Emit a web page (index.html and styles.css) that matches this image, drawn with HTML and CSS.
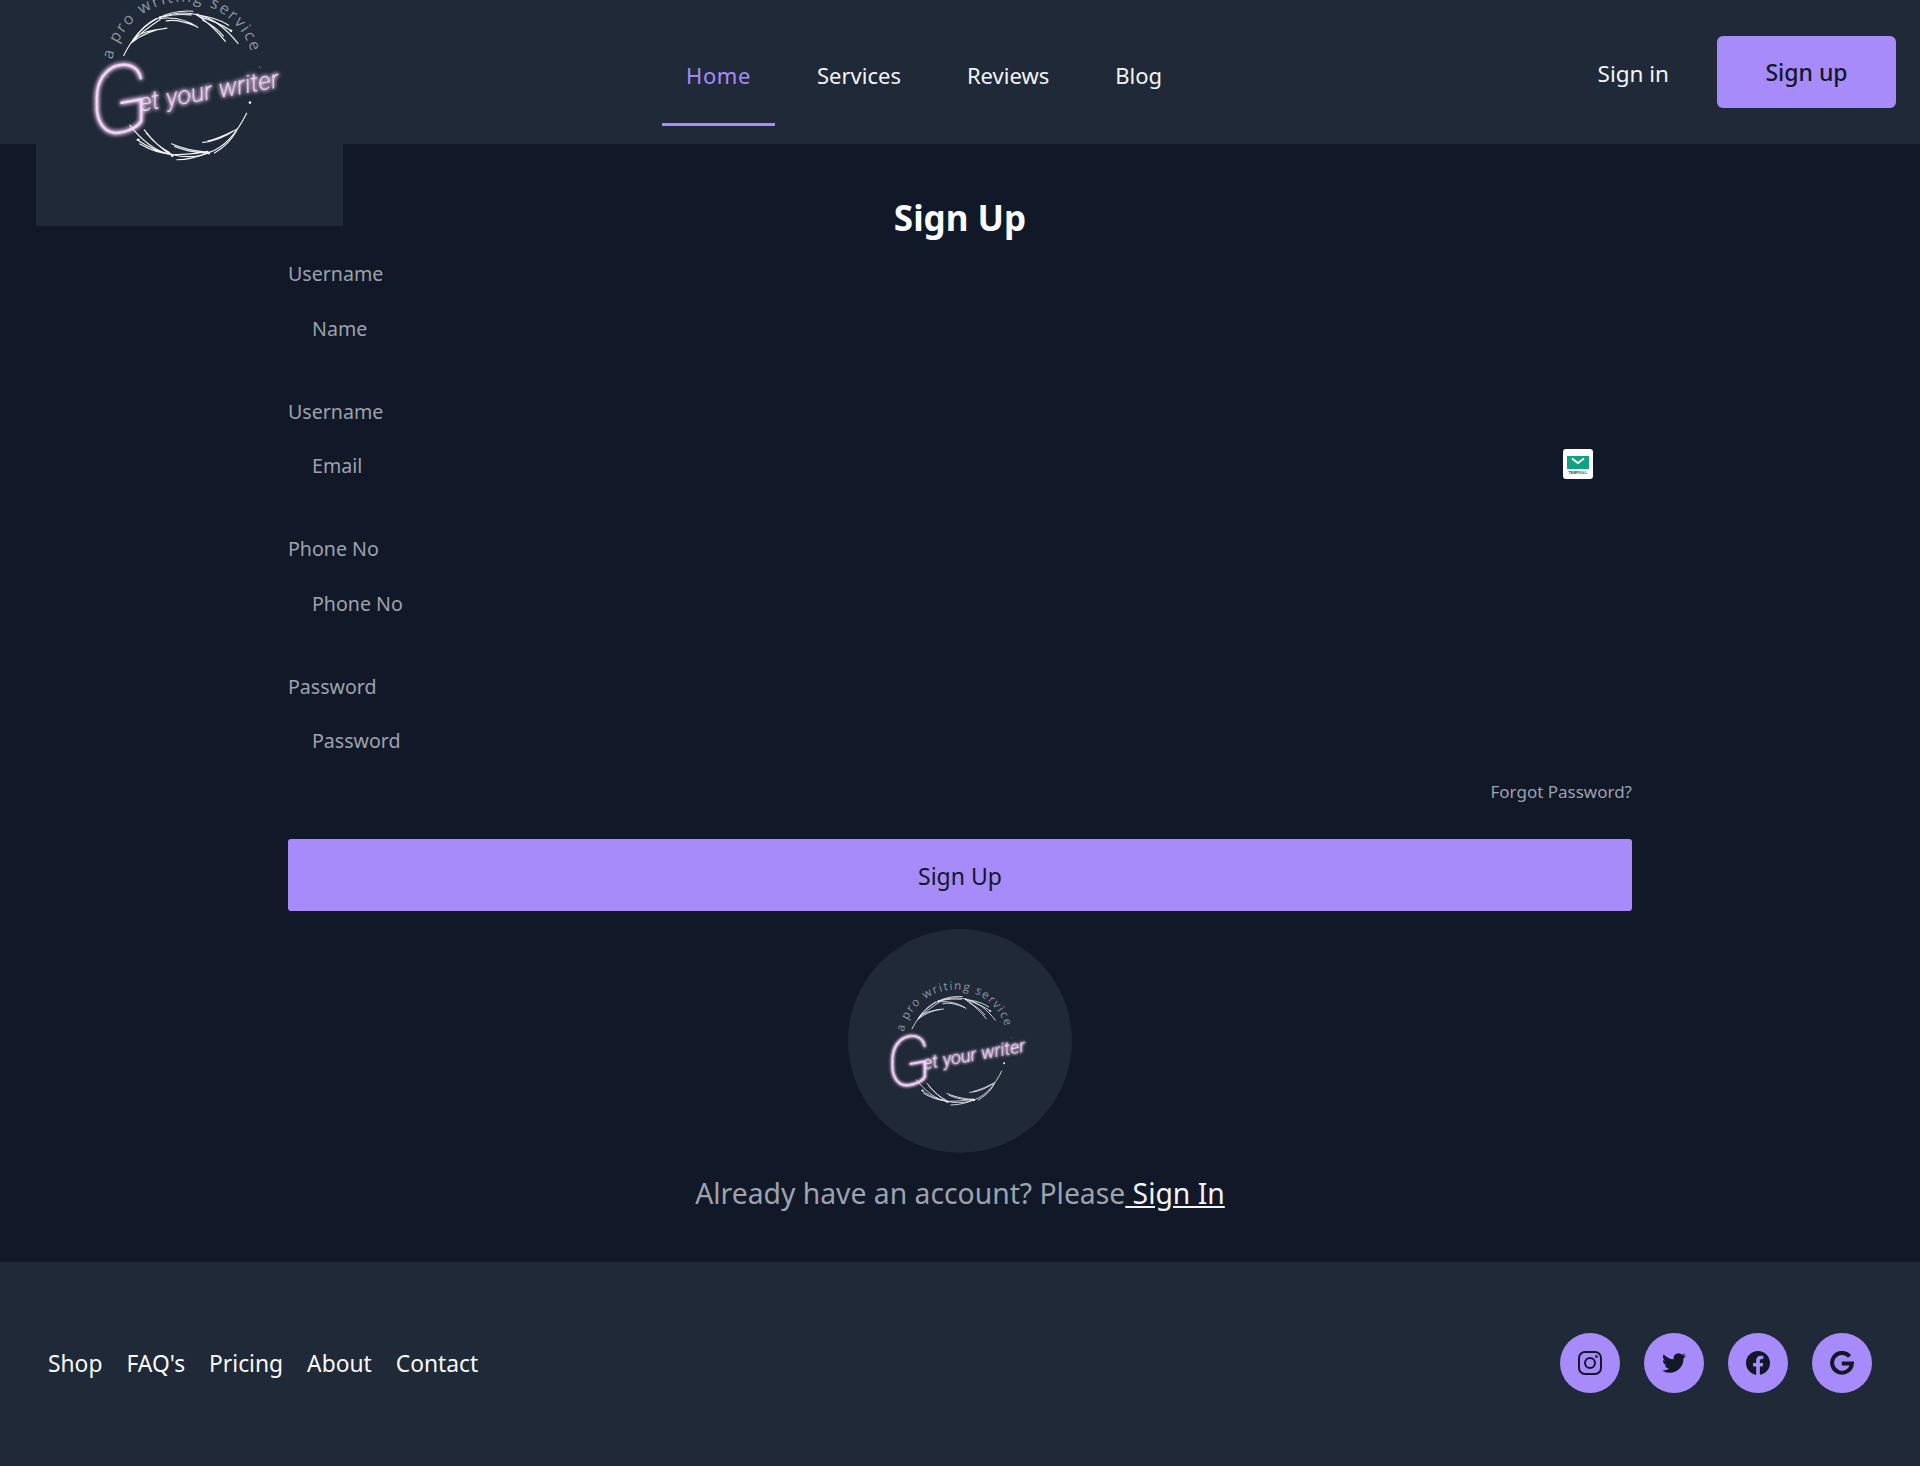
FILE: index.html
```html
<!DOCTYPE html>
<html lang="en">
<head>
  <meta charset="UTF-8">
  <meta name="viewport" content="width=device-width, initial-scale=1.0">
  <title>Sign Up - Get your writer</title>
  <link rel="stylesheet" href="styles.css">
</head>
<body>
  <header class="topbar">
    <a class="logo-box" href="#">
      <svg class="logo-img" viewBox="108 -246 924 924" role="img" aria-label="Get your writer">
        <defs>
          <filter id="neon" x="-20%" y="-40%" width="140%" height="180%">
            <feGaussianBlur stdDeviation="6" result="blur"/>
            <feMerge><feMergeNode in="blur"/><feMergeNode in="blur"/><feMergeNode in="SourceGraphic"/></feMerge>
          </filter>
          <path id="ring" d="M338 179A216 216 0 0 1 760 170"/>
        </defs>
        <g id="logo-art">
          <text class="logo-tag"><textPath href="#ring" textLength="570">a pro writing service</textPath></text>
          <path class="logo-tick" d="M322 235L327 228M780 198L783 205"/>
          <g class="leaf">
            <path d="M372 166C395 120 430 75 480 52C520 38 560 34 595 44C640 52 680 85 716 130"/>
            <path d="M395 128C430 100 460 88 502 84M400 120C420 90 445 68 470 55M405 112C430 95 470 88 490 86M398 124C430 92 460 72 482 58"/>
            <path d="M480 52C510 36 545 31 580 33M480 55C525 50 565 60 595 82M500 62C530 56 560 66 590 78M490 50C520 42 550 42 575 44"/>
            <path d="M595 46C625 48 655 55 688 75M595 46C630 70 655 95 678 124M600 50C640 60 670 75 695 92M610 60C640 75 660 92 672 108"/>
            <path d="M390 376C420 415 470 460 520 465C560 475 600 470 630 458C680 440 715 395 742 340"/>
            <path d="M434 390C460 425 490 450 518 468M412 420C450 445 480 460 520 465M420 432C450 450 485 462 515 462M440 400C465 430 490 448 510 458"/>
            <path d="M516 432C555 450 595 455 630 458M532 480C570 480 600 470 630 458M520 465C555 465 590 462 625 455M525 440C560 455 590 458 620 460"/>
            <path d="M610 428C650 425 680 410 712 388M645 460C670 445 695 425 712 392M625 424C660 415 685 402 705 392"/>
          </g>
          <g class="leaf-dots">
            <circle cx="482" cy="52" r="4"/><circle cx="594" cy="44" r="4"/><circle cx="695" cy="92" r="4"/>
            <circle cx="416" cy="420" r="4"/><circle cx="518" cy="468" r="4"/><circle cx="628" cy="460" r="4"/>
            <circle cx="752" cy="308" r="4"/>
          </g>
          <text class="logo-script" transform="rotate(-10 400 335)" filter="url(#neon)"><tspan class="logo-script-g" x="268" y="392">G</tspan><tspan x="422" y="340">et</tspan><tspan x="504" y="340">your</tspan><tspan x="665" y="340">writer</tspan></text>
        </g>
      </svg>
    </a>

    <nav class="main-nav">
      <a class="nav-link active" href="#">Home</a>
      <a class="nav-link" href="#">Services</a>
      <a class="nav-link" href="#">Reviews</a>
      <a class="nav-link" href="#">Blog</a>
    </nav>

    <div class="auth-links">
      <a class="signin-link" href="#">Sign in</a>
      <a class="signup-btn" href="#">Sign up</a>
    </div>
  </header>

  <main class="page">
    <h1>Sign Up</h1>
    <form class="signup-form">
      <div class="field">
        <label for="name">Username</label>
        <input id="name" type="text" placeholder="Name">
      </div>
      <div class="field">
        <label for="email">Username</label>
        <div class="input-wrap">
          <input id="email" type="text" placeholder="Email">
          <span class="tempmail">
            <svg viewBox="0 0 30 30" width="30" height="30">
              <rect x="4" y="7" width="22" height="13" fill="#13a184"/>
              <path d="M9 9.5L15 14L21 9.5" fill="none" stroke="#fff" stroke-width="1.8"/>
              <text class="tempmail-text" x="15" y="25">TEMP<tspan class="tempmail-mail">MAIL</tspan></text>
            </svg>
          </span>
        </div>
      </div>
      <div class="field">
        <label for="phone">Phone No</label>
        <input id="phone" type="text" placeholder="Phone No">
      </div>
      <div class="field field-last">
        <label for="password">Password</label>
        <input id="password" type="password" placeholder="Password">
      </div>
      <a class="forgot" href="#">Forgot Password?</a>
      <button class="submit-btn" type="button">Sign Up</button>
    </form>

    <div class="logo-circle">
      <svg class="logo-img-small" viewBox="108 -246 924 924" role="img" aria-label="Get your writer">
        <use href="#logo-art"/>
      </svg>
    </div>

    <p class="have-account">Already have an account? Please<a href="#"> Sign In</a></p>
  </main>

  <footer class="footer">
    <nav class="footer-nav">
      <a href="#">Shop</a>
      <a href="#">FAQ's</a>
      <a href="#">Pricing</a>
      <a href="#">About</a>
      <a href="#">Contact</a>
    </nav>
    <div class="socials">
      <a class="social" href="#" aria-label="Instagram">
        <svg viewBox="0 0 24 24" width="24" height="24">
          <rect x="1" y="1" width="22" height="22" rx="6" fill="none" stroke="#111827" stroke-width="2"/>
          <circle cx="12" cy="12" r="5" fill="none" stroke="#111827" stroke-width="2"/>
          <circle cx="18.4" cy="5.6" r="1.4" fill="#111827"/>
        </svg>
      </a>
      <a class="social" href="#" aria-label="Twitter">
        <svg viewBox="0 0 24 24" width="24" height="24">
          <path fill="#111827" d="M23.953 4.57a10 10 0 01-2.825.775 4.958 4.958 0 002.163-2.723c-.951.555-2.005.959-3.127 1.184a4.92 4.92 0 00-8.384 4.482C7.69 8.095 4.067 6.13 1.64 3.162a4.822 4.822 0 00-.666 2.475c0 1.71.87 3.213 2.188 4.096a4.904 4.904 0 01-2.228-.616v.06a4.923 4.923 0 003.946 4.827 4.996 4.996 0 01-2.212.085 4.936 4.936 0 004.604 3.417 9.867 9.867 0 01-6.102 2.105c-.39 0-.779-.023-1.17-.067a13.995 13.995 0 007.557 2.209c9.053 0 13.998-7.496 13.998-13.985 0-.21 0-.42-.015-.63A9.935 9.935 0 0024 4.59z"/>
        </svg>
      </a>
      <a class="social" href="#" aria-label="Facebook">
        <svg viewBox="0 0 24 24" width="24" height="24">
          <path fill="#111827" d="M24 12.073c0-6.627-5.373-12-12-12s-12 5.373-12 12c0 5.99 4.388 10.954 10.125 11.854v-8.385H7.078v-3.47h3.047V9.43c0-3.007 1.792-4.669 4.533-4.669 1.312 0 2.686.235 2.686.235v2.953H15.83c-1.491 0-1.956.925-1.956 1.874v2.25h3.328l-.532 3.47h-2.796v8.385C19.612 23.027 24 18.062 24 12.073z"/>
        </svg>
      </a>
      <a class="social" href="#" aria-label="Google">
        <svg viewBox="0 0 24 24" width="24" height="24">
          <path fill="none" stroke="#111827" stroke-width="4" d="M19.6 5.4A9.9 9.9 0 1 0 21.9 12.6H11.8"/>
        </svg>
      </a>
    </div>
  </footer>
</body>
</html>
```

FILE: styles.css
```css
* {
  box-sizing: border-box;
}

body {
  margin: 0;
  font-family: "Noto Sans", "Open Sans", Arial, sans-serif;
  background-color: #111827;
  color: #9ca3af;
}

a {
  color: inherit;
  text-decoration: none;
}

.topbar {
  display: flex;
  align-items: center;
  height: 144px;
  padding: 0 24px 0 36px;
  background-color: #1f2937;
}

.logo-box {
  align-self: flex-start;
  flex: none;
  width: 307px;
  height: 308px;
  margin-top: -82px;
  background-color: #1f2937;
}

.logo-img,
.logo-img-small {
  display: block;
  width: 100%;
  height: 100%;
}

.logo-tag {
  font-family: "Open Sans", sans-serif;
  font-size: 48px;
  fill: #9096a0;
}

.logo-tick {
  stroke: #8b929b;
  stroke-width: 2;
}

.leaf {
  fill: none;
  stroke: #f1f2f4;
  stroke-width: 3.4;
  stroke-linecap: round;
}

.leaf-dots {
  fill: #f1f2f4;
}

.logo-script {
  font-family: Roboto, sans-serif;
  font-style: italic;
  font-weight: 300;
  font-size: 76px;
  fill: #f9d5fb;
}

.logo-script-g {
  font-size: 285px;
  font-weight: 100;
}

.main-nav {
  display: flex;
  align-self: flex-start;
  gap: 18px;
  margin-left: 319px;
}

.nav-link {
  height: 90px;
  margin-top: 36px;
  padding: 24px 24px 0;
  font-size: 22px;
  color: #f3f4f6;
  border-bottom: 3px solid transparent;
}

.nav-link.active {
  color: #a78bfa;
  letter-spacing: 0.6px;
  border-bottom-color: #a78bfa;
}

.auth-links {
  display: flex;
  align-items: center;
  gap: 48px;
  margin-left: auto;
}

.signin-link {
  padding-top: 2px;
  font-size: 22.5px;
  color: #f3f4f6;
}

.signup-btn {
  display: block;
  width: 179px;
  height: 72px;
  line-height: 72px;
  text-align: center;
  font-size: 23px;
  font-weight: 500;
  color: #111827;
  background-color: #a78bfa;
  border-radius: 6px;
}

.page {
  display: flex;
  flex-direction: column;
  align-items: center;
  height: 1118px;
  padding-top: 54px;
}

h1 {
  margin: 0 0 22px;
  font-size: 35px;
  line-height: 40px;
  font-weight: 700;
  color: #f9fafb;
}

.signup-form {
  display: flex;
  flex-direction: column;
  width: 1344px;
}

.field {
  margin-bottom: 43.5px;
}

.field-last {
  margin-bottom: 0;
}

.field label {
  display: block;
  margin-bottom: 14px;
  font-size: 19.6px;
  line-height: 28px;
}

.field input {
  display: block;
  width: 100%;
  height: 52px;
  padding: 0 24px;
  font-family: inherit;
  font-size: 19.6px;
  color: #f3f4f6;
  background: transparent;
  border: none;
  outline: none;
}

.field input::placeholder {
  color: #9ca3af;
  opacity: 1;
}

.input-wrap {
  position: relative;
}

.tempmail {
  position: absolute;
  top: 9px;
  right: 39px;
  width: 30px;
  height: 30px;
  background-color: #fff;
  border-radius: 3px;
}

.tempmail svg {
  display: block;
}

.tempmail-text {
  font-family: "Liberation Sans", sans-serif;
  font-size: 3.6px;
  font-weight: 700;
  text-anchor: middle;
  fill: #1f3b4d;
}

.tempmail-mail {
  fill: #13a184;
}

.forgot {
  align-self: flex-end;
  margin-top: 13px;
  font-size: 17px;
  line-height: 24px;
}

.submit-btn {
  height: 72px;
  margin-top: 35px;
  padding-top: 3px;
  font-family: inherit;
  font-size: 23px;
  color: #111827;
  background-color: #a78bfa;
  border: none;
  border-radius: 3px;
  cursor: pointer;
}

.logo-circle {
  width: 224px;
  height: 224px;
  margin-top: 18px;
  background-color: #1f2937;
  border-radius: 50%;
  flex: none;
}

.have-account {
  margin: 20px 0 0;
  font-size: 28.3px;
  line-height: 40px;
}

.have-account a {
  color: #f3f4f6;
  text-decoration: underline;
}

.footer {
  display: flex;
  align-items: center;
  justify-content: space-between;
  height: 204px;
  padding: 0 48px 2px;
  background-color: #1f2937;
}

.footer-nav {
  display: flex;
  gap: 24px;
  font-size: 22.8px;
  color: #f9fafb;
}

.socials {
  display: flex;
  gap: 24px;
}

.social {
  display: flex;
  align-items: center;
  justify-content: center;
  width: 60px;
  height: 60px;
  background-color: #a78bfa;
  border-radius: 50%;
}
```
